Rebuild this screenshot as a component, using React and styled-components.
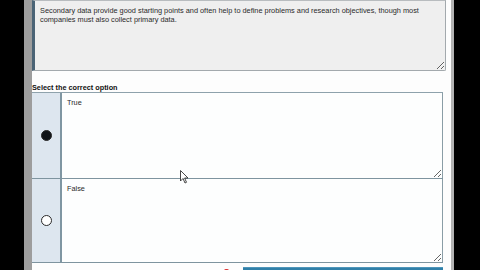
import styled, { createGlobalStyle } from "styled-components"

const Global = createGlobalStyle`
  html, body { margin: 0; padding: 0; background: #000; }
  body { font-family: "Liberation Sans", Arial, sans-serif; }
`

const Screen = styled.div`
  position: relative;
  width: 480px;
  height: 270px;
  overflow: hidden;
  background: #000;
  display: flex;
`

const Page = styled.div`
  margin-left: 24px;
  width: 430px;
  height: 100%;
  box-sizing: border-box;
  background: #fdfdfd;
  border-left: 8px solid #9d9d9d;
  border-right: 3px solid #b4b4b4;
  display: flex;
  flex-direction: column;
  overflow: hidden;
  & > * { flex-shrink: 0; }
`

const Question = styled.textarea`
  display: block;
  width: 414px;
  height: 71px;
  box-sizing: border-box;
  margin: 0;
  padding: 6px 6px 0 5px;
  background: #efefef;
  border: 1px solid #a3a9ad;
  border-left: 3px solid #4b6476;
  border-top-color: #b8bcbf;
  border-radius: 0 0 2px 0;
  font-family: "Liberation Sans", Arial, sans-serif;
  font-size: 7.35px;
  line-height: 8.5px;
  color: #2a2a2a;
  resize: both;
  outline: none;
`

const Label = styled.div`
  padding-top: 12px;
  height: 9px;
  font-size: 7.3px;
  line-height: 9px;
  font-weight: bold;
  color: #111;
  box-sizing: content-box;
`

const Options = styled.div`
  width: 411px;
  border-top: 1px solid #8ea2ac;
  display: flex;
  flex-direction: column;
`

const Row = styled.div`
  display: flex;
  box-sizing: border-box;
  height: 86px;
  border-bottom: 1px solid #7e949f;
  &:last-child { height: 84px; }
`

const RadioCell = styled.div`
  width: 28px;
  background: #dde6ef;
  border-right: 2px solid #7f96a2;
  display: flex;
  align-items: center;
  justify-content: center;
`

const Radio = styled.span`
  width: 11px;
  height: 11px;
  border-radius: 50%;
  box-sizing: border-box;
  border: 1px solid #2a2a2a;
  background: ${(p) => (p.checked ? "#101418" : "#fff")};
`

const Answer = styled.textarea`
  flex: 1;
  margin: 0;
  box-sizing: border-box;
  padding: 5px 5px 0 5px;
  border: none;
  border-right: 1px solid #8a9da6;
  background: #fdfefe;
  font-family: "Liberation Sans", Arial, sans-serif;
  font-size: 7.3px;
  line-height: 9px;
  color: #2a2a2a;
  resize: vertical;
  outline: none;
`

const Footer = styled.div`
  display: flex;
  justify-content: flex-end;
  align-items: flex-start;
  padding-top: 4px;
  padding-right: 8px;
  gap: 14px;
`

const Mark = styled.span`
  width: 5px;
  height: 3px;
  margin-top: 2px;
  background: #d33;
  border-radius: 2px 2px 0 0;
`

const Submit = styled.button`
  width: 200px;
  height: 20px;
  border: none;
  background: #2f7fa8;
  border-top: 1px solid #4e95ba;
`

const Cursor = styled.svg`
  position: absolute;
  left: 180px;
  top: 170px;
`

const options = [
  { text: "True", checked: true },
  { text: "False", checked: false },
]

export default function App() {
  return (
    <>
      <Global />
      <Screen>
        <Page>
          <Question
            readOnly
            value="Secondary data provide good starting points and often help to define problems and research objectives, though most companies must also collect primary data."
          />
          <Label>Select the correct option</Label>
          <Options>
            {options.map((o) => (
              <Row key={o.text}>
                <RadioCell>
                  <Radio checked={o.checked} />
                </RadioCell>
                <Answer readOnly value={o.text} />
              </Row>
            ))}
          </Options>
          <Footer>
            <Mark />
            <Submit />
          </Footer>
        </Page>
        <Cursor width="9" height="14" viewBox="0 0 9 14">
          <path d="M0.5 0.5 L0.5 11 L3 8.5 L5 13 L6.5 12.3 L4.6 8 L8 8 Z" fill="#fff" stroke="#333" strokeWidth="0.9" />
        </Cursor>
      </Screen>
    </>
  )
}
